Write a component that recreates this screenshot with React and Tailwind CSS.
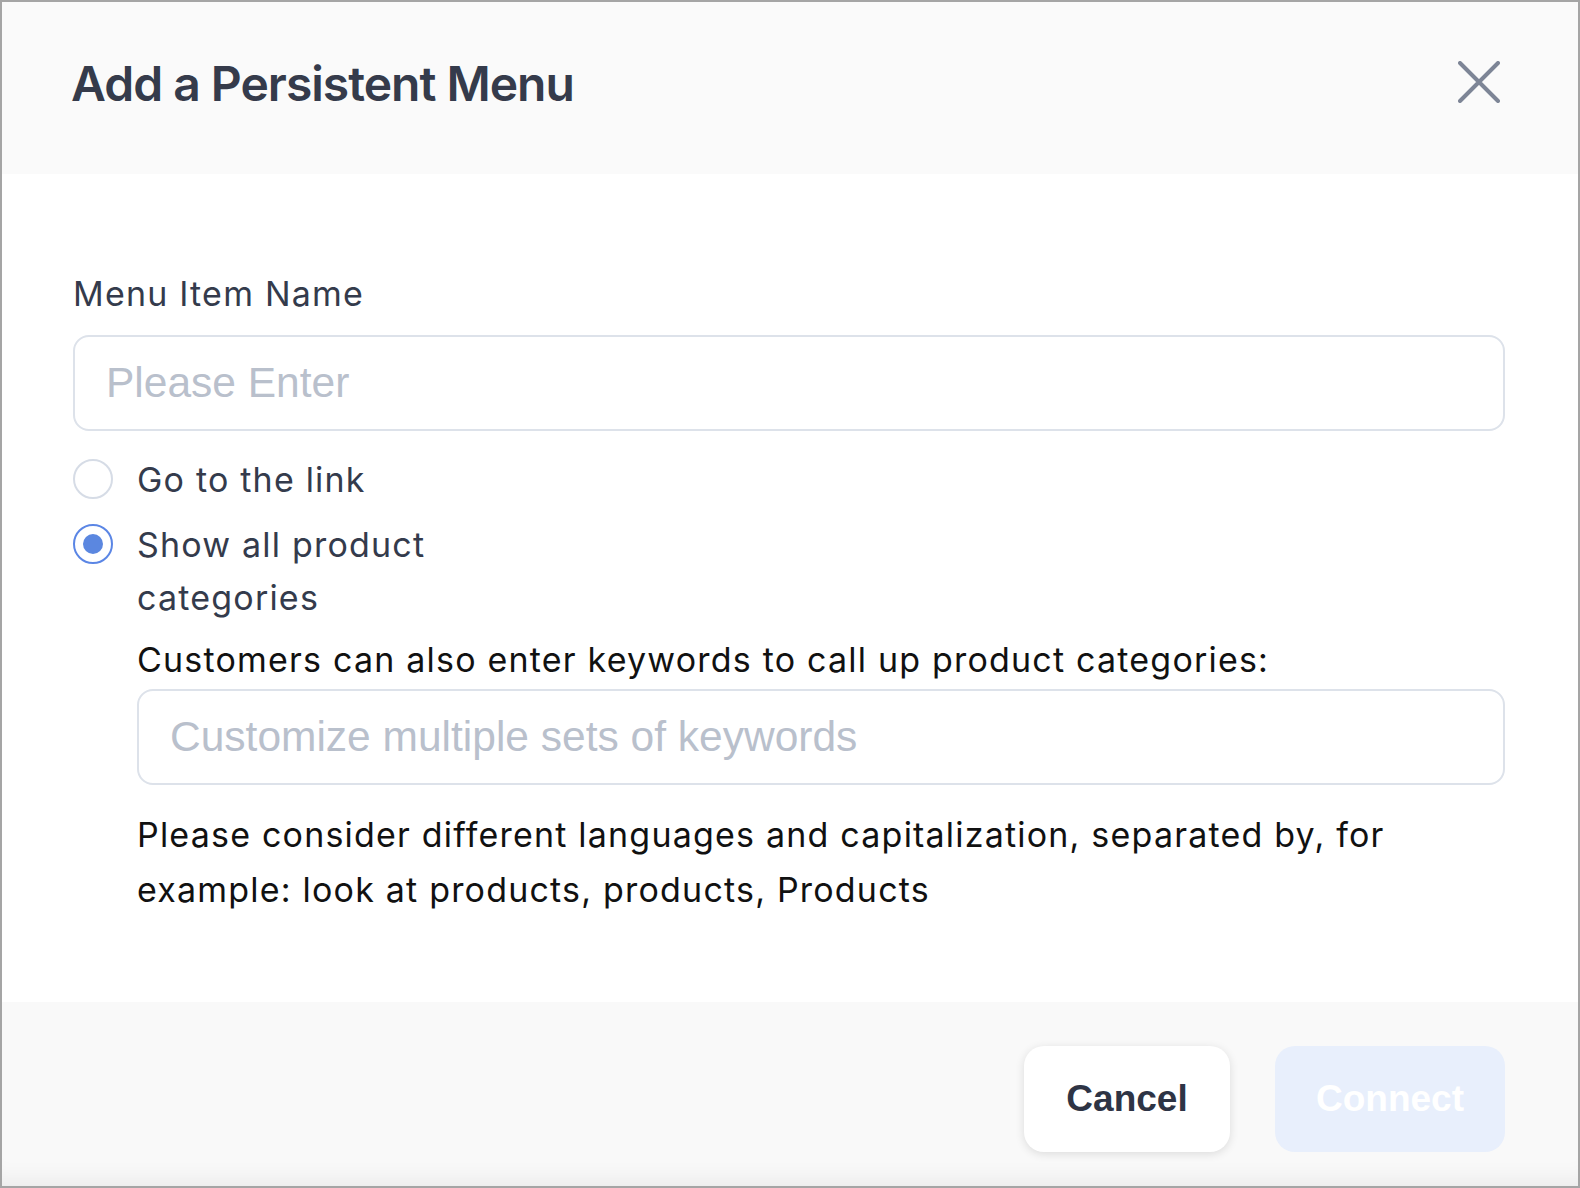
export default function App() {
  return (
    <div className="w-[1580px] h-[1188px] border-2 border-[#a5a5a5] bg-white flex flex-col font-['Inter',sans-serif] overflow-hidden">
      {/* Header */}
      <div className="h-[172px] bg-[#fafafa] flex items-start justify-between pl-[69px] pr-[78px] pt-[52px] shrink-0">
        <h1 className="text-[48px] leading-[60px] font-semibold text-[#353b4b] tracking-[-1px]">Add a Persistent Menu</h1>
        <button className="w-[42px] h-[42px] mt-[7px] flex items-center justify-center">
          <svg width="42" height="42" viewBox="0 0 42 42" fill="none">
            <path d="M2 2 L40 40 M40 2 L2 40" stroke="#7d8596" strokeWidth="4" strokeLinecap="round" />
          </svg>
        </button>
      </div>

      {/* Body */}
      <div className="flex-1 pl-[71px] pr-[73px] pt-[98px]">
        <div className="text-[34px] leading-[44px] tracking-[1.2px] text-[#343b4c]">Menu Item Name</div>
        <div className="mt-[19px] h-[96px] rounded-[16px] border-2 border-[#dde2ea] flex items-center pl-[31px]">
          <span className="font-['Liberation_Sans',Arial,sans-serif] text-[42.5px] text-[#b9c0cc]">Please Enter</span>
        </div>

        <div className="mt-[22px] flex items-start gap-[24px]">
          <div className="mt-[6px] w-[40px] h-[40px] rounded-full border-2 border-[#d6dce6] bg-white shrink-0"></div>
          <div className="text-[34px] leading-[53px] tracking-[1.2px] text-[#343b4c]">Go to the link</div>
        </div>

        <div className="mt-[12px] flex items-start gap-[24px]">
          <div className="mt-[6px] w-[40px] h-[40px] rounded-full border-2 border-[#5b86e5] bg-white shrink-0 flex items-center justify-center">
            <div className="w-[20px] h-[20px] rounded-full bg-[#5b87e0]"></div>
          </div>
          <div className="w-[310px] text-[34px] leading-[53px] tracking-[1.2px] text-[#343b4c]">Show all product categories</div>
        </div>

        <div className="pl-[64px]">
          <div className="mt-[9px] text-[34px] leading-[53px] tracking-[1.2px] text-[#111111]">Customers can also enter keywords to call up product categories:</div>
          <div className="mt-[3px] h-[96px] rounded-[16px] border-2 border-[#dde2ea] flex items-center pl-[31px]">
            <span className="font-['Liberation_Sans',Arial,sans-serif] text-[42.5px] text-[#b9c0cc]">Customize multiple sets of keywords</span>
          </div>
          <div className="mt-[23px] text-[34px] leading-[54.5px] tracking-[1.2px] text-[#111111]">
            Please consider different languages and capitalization, separated by, for example: look at products, products, Products
          </div>
        </div>
      </div>

      {/* Footer */}
      <div className="h-[184px] shrink-0 bg-[#f9f9f9] shadow-[inset_0_-24px_24px_-20px_rgba(0,0,0,0.07)] flex items-start justify-end gap-[45px] pr-[73px] pt-[44px]">
        <button className="w-[206px] h-[106px] rounded-[20px] bg-white shadow-[0_2px_10px_rgba(0,0,0,0.12)] font-['Liberation_Sans',Arial,sans-serif] font-bold text-[37px] text-[#2e3445]">Cancel</button>
        <button className="w-[230px] h-[106px] rounded-[20px] bg-[#e8effc] font-['Liberation_Sans',Arial,sans-serif] font-bold text-[37px] text-white">Connect</button>
      </div>
    </div>
  );
}
